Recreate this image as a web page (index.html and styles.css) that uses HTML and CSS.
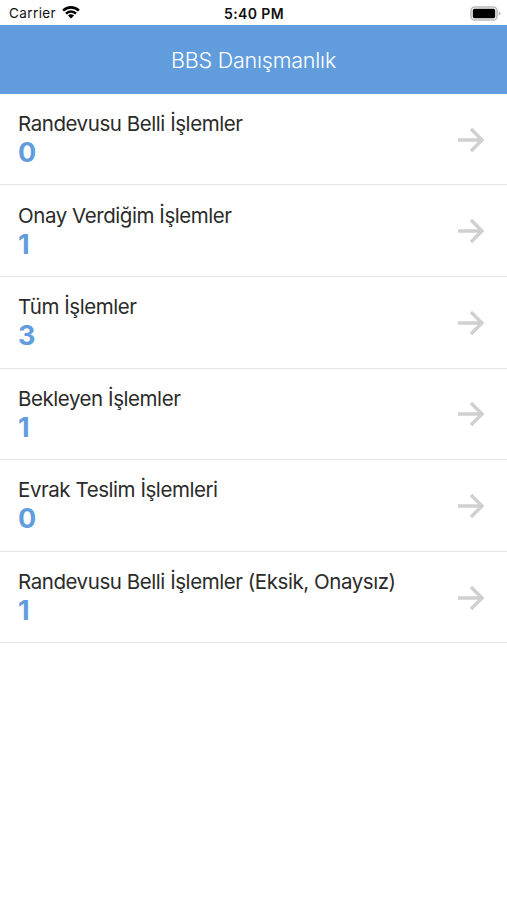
FILE: index.html
```html
<!DOCTYPE html>
<html lang="tr">
<head>
<meta charset="utf-8">
<title>BBS Danışmanlık</title>
<link rel="stylesheet" href="styles.css">
</head>
<body>
<div class="status">
  <div class="carrier"><span>Carrier</span><svg width="18" height="14" viewBox="0 0 18 14"><path d="M.2 4.8A12.3 12.3 0 0 1 17.8 4.8L16 6.6A9.8 9.8 0 0 0 2 6.6Z"/><path d="M3.1 7.7A8.2 8.2 0 0 1 14.9 7.7L13.1 9.5A5.7 5.7 0 0 0 4.9 9.5Z"/><path d="M6 10.6A4.2 4.2 0 0 1 12 10.6L9 13.6Z"/></svg></div>
  <div class="time">5:40 PM</div>
  <div class="power"><svg width="31" height="15" viewBox="0 0 31 15"><rect x="1" y="1" width="26" height="13" rx="4" fill="none" stroke="#bbb" stroke-width="1.6"/><rect x="2.8" y="2.8" width="22.4" height="9.4" rx="1.6"/><path d="M28.6 5.2Q30.7 5.9 30.7 7.5T28.6 9.8Z" fill="#bbb"/></svg></div>
</div>
<header class="header"><h1 class="title">BBS Danışmanlık</h1></header>
<main class="list">
  <a class="row"><div><div class="label">Randevusu Belli İşlemler</div><div class="count">0</div></div><svg class="arrow" viewBox="0 0 28 28"><path d="M1 14H25M14 3L25 14L14 25"/></svg></a>
  <a class="row"><div><div class="label">Onay Verdiğim İşlemler</div><div class="count">1</div></div><svg class="arrow" viewBox="0 0 28 28"><path d="M1 14H25M14 3L25 14L14 25"/></svg></a>
  <a class="row"><div><div class="label">Tüm İşlemler</div><div class="count">3</div></div><svg class="arrow" viewBox="0 0 28 28"><path d="M1 14H25M14 3L25 14L14 25"/></svg></a>
  <a class="row"><div><div class="label">Bekleyen İşlemler</div><div class="count">1</div></div><svg class="arrow" viewBox="0 0 28 28"><path d="M1 14H25M14 3L25 14L14 25"/></svg></a>
  <a class="row"><div><div class="label">Evrak Teslim İşlemleri</div><div class="count">0</div></div><svg class="arrow" viewBox="0 0 28 28"><path d="M1 14H25M14 3L25 14L14 25"/></svg></a>
  <a class="row"><div><div class="label">Randevusu Belli İşlemler (Eksik, Onaysız)</div><div class="count">1</div></div><svg class="arrow" viewBox="0 0 28 28"><path d="M1 14H25M14 3L25 14L14 25"/></svg></a>
</main>
</body>
</html>
```
FILE: styles.css
```css
* { box-sizing: border-box; }
body { margin: 0; background: #fff; color: #2b2b2b; font-family: Inter, "Liberation Sans", sans-serif; }
.status { display: grid; grid-template-columns: 1fr auto 1fr; align-items: center; height: 25.4px; padding: 1px 6px 0 9px; color: #111; font-size: 13.5px; }
.carrier { display: flex; align-items: center; gap: 6px; letter-spacing: 0.4px; }
.carrier svg { margin-top: -3px; }
.time { margin-right: 2px; font-size: 14px; font-weight: 600; letter-spacing: 0.4px; }
.power { display: flex; justify-content: flex-end; }
.header { display: flex; align-items: center; justify-content: center; height: 68.4px; padding-top: 1px; background: #619ddd; color: #fff; }
.title { margin: 0; font-size: 21.5px; font-weight: 350; letter-spacing: -0.2px; }
.row { display: flex; justify-content: space-between; align-items: center; height: 91.6px; padding: 0 22px 0 18px; border-bottom: 1px solid #e4e4e4; }
.label { margin-top: -1px; font-size: 20.5px; line-height: 28px; letter-spacing: -0.44px; white-space: nowrap; }
.count { font-size: 27px; line-height: 29px; font-weight: 650; color: #619ddd; }
.arrow { width: 28px; height: 28px; margin-top: 1px; fill: none; stroke: #d0d0d0; stroke-width: 3.4; }
```
